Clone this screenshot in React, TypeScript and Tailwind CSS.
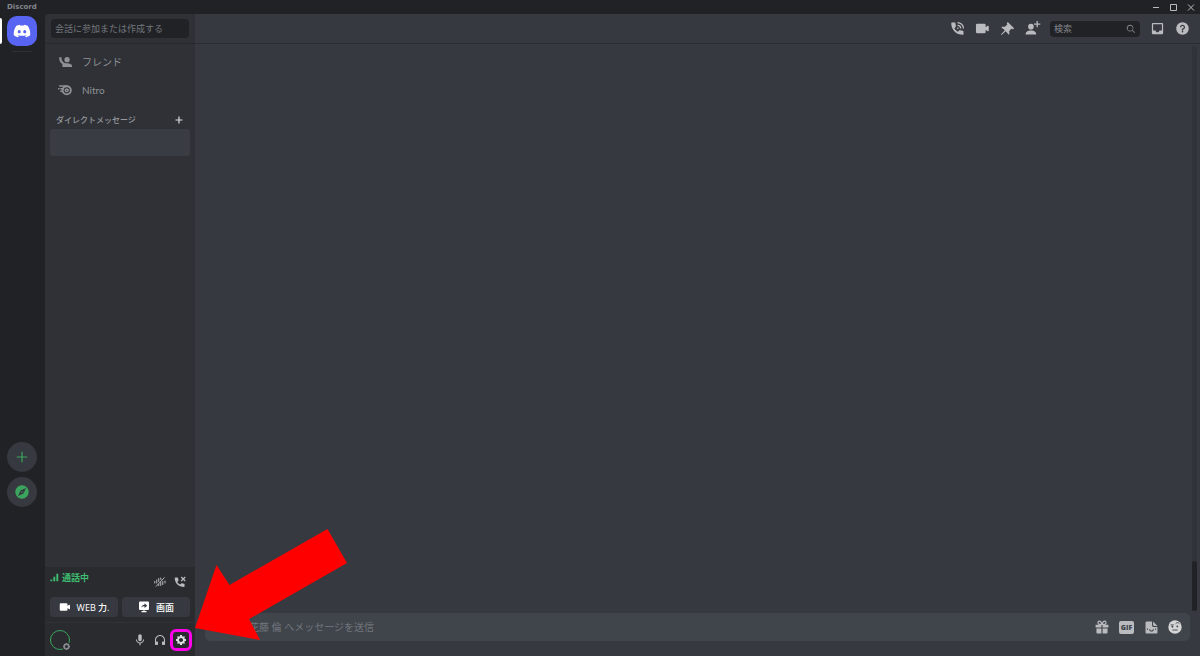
import type { ReactNode } from "react";
import { MdExplore, MdMic } from "react-icons/md";
import { FaDiscord } from "react-icons/fa";

type IconProps = { className?: string };

function Svg({ className, children }: IconProps & { children: ReactNode }) {
  return (
    <svg viewBox="0 0 24 24" className={className} fill="currentColor" aria-hidden="true">
      {children}
    </svg>
  );
}

const FriendsIcon = ({ className }: IconProps) => (
  <Svg className={className}>
    <g transform="translate(2 4)">
      <path d="M0,0 L0,1.5 C0,5.65 2.21,9.28 5.5,11.3 L5.500,16.500 L22,16.500 L22,14.34 C22,11.67 15.67,10.34 13,10.34 L12.75,10.34 C8,10.34 4,6 4,1.5 L4,0 Z" />
      <circle cx="13.500" cy="4" r="4.500" />
    </g>
  </Svg>
);

const NitroIcon = ({ className }: IconProps) => (
  <Svg className={className}>
    <path d="M2 4h13v2.500H2zM4 8.500h5V11H4zM0 8.500h2.500V11H0zM4 13h4v2.500H4z" />
    <circle cx="15" cy="12.500" r="7" fill="none" stroke="currentColor" strokeWidth="3.200" />
    <path fillRule="evenodd" d="M15 8.800l3.500 1.900v3.600L15 16.200l-3.500-1.900v-3.600zM15 11.500a1 1 0 1 0 0 2 1 1 0 0 0 0-2z" />
  </Svg>
);

const CallIcon = ({ className }: IconProps) => (
  <Svg className={className}>
    <path d="M3 2.500h4.500c.6 0 1 .4 1.100 1l.9 4.500c.1.400 0 .8-.3 1.100L7 11.500c1.400 2.500 3.200 4.300 5.700 5.700l2.300-2.300c.3-.3.7-.4 1.100-.3l4.500.9c.600.1 1 .5 1 1.100V21c0 .6-.4 1-1 1C10 22 2 14 2 3.500c0-.6.4-1 1-1z" />
    <path d="M12 2.500a9.500 9.500 0 0 1 9.500 9.500M12 7a5 5 0 0 1 5 5" fill="none" stroke="currentColor" strokeWidth="2" />
    <circle cx="12.500" cy="11.500" r="1.300" />
  </Svg>
);

const VideoIcon = ({ className }: IconProps) => (
  <Svg className={className}>
    <path d="M3.500 4.500h11.500a2 2 0 0 1 2 2V10l3.300-2.300c.7-.4 1.700 0 1.700.9v6.800c0 .9-1 1.300-1.700.9L17 14v3.500a2 2 0 0 1-2 2H3.500a2 2 0 0 1-2-2v-11a2 2 0 0 1 2-2z" />
  </Svg>
);

const PinIcon = ({ className }: IconProps) => (
  <Svg className={className}>
    <path d="M22.500 11.500L12.500 1.500L10.686 3.514L11.900 5.200L8 9.300L3 9L2.300 10.500L7.800 14.800L1.500 21.500L2.500 22.500L9.200 16.200L13.500 21.700L15 21L14.700 16L18.800 12.100L20.586 13.414Z" />
  </Svg>
);

const AddFriendIcon = ({ className }: IconProps) => (
  <Svg className={className}>
    <circle cx="9.500" cy="9" r="4.500" />
    <path d="M1 21.500c0-4.500 3.500-6.500 8.500-6.500s8.500 2 8.500 6.500zM18.500 0h2v4h4v2h-4v4h-2V6h-4V4h4z" />
  </Svg>
);

const SearchIcon = ({ className }: IconProps) => (
  <Svg className={className}>
    <path d="M21.7 20.300L16 14.600a8 8 0 1 0-1.400 1.400l5.700 5.700zM10 16a6 6 0 1 1 0-12 6 6 0 0 1 0 12z" />
  </Svg>
);

const InboxIcon = ({ className }: IconProps) => (
  <Svg className={className}>
    <path
      fillRule="evenodd"
      d="M19 3H4.990C3.880 3 3.010 3.890 3.010 5L3 19C3 20.100 3.880 21 4.990 21H19C20.100 21 21 20.100 21 19V5C21 3.890 20.100 3 19 3ZM19 15H15C15 16.660 13.650 18 12 18C10.350 18 9 16.660 9 15H4.990V5H19V15Z"
    />
  </Svg>
);

const HelpIcon = ({ className }: IconProps) => (
  <Svg className={className}>
    <path
      fillRule="evenodd"
      d="M12 2C6.486 2 2 6.487 2 12C2 17.515 6.486 22 12 22C17.514 22 22 17.515 22 12C22 6.487 17.514 2 12 2ZM12 18.250C11.310 18.250 10.750 17.691 10.750 17C10.750 16.310 11.310 15.750 12 15.750C12.690 15.750 13.250 16.310 13.250 17C13.250 17.691 12.690 18.250 12 18.250ZM13 13.875V15H11V12H12C13.104 12 14 11.103 14 10C14 8.896 13.104 8 12 8C10.896 8 10 8.896 10 10H8C8 7.795 9.795 6 12 6C14.205 6 16 7.795 16 10C16 11.861 14.723 13.429 13 13.875Z"
    />
  </Svg>
);

const GearIcon = ({ className }: IconProps) => (
  <Svg className={className}>
    <path
      fillRule="evenodd"
      d="M19.738 10H22V14H19.739C19.498 14.931 19.100 15.798 18.565 16.564L20 18L18 20L16.565 18.564C15.797 19.099 14.932 19.498 14 19.738V22H10V19.738C9.069 19.498 8.203 19.099 7.436 18.564L6 20L4 18L5.436 16.564C4.901 15.799 4.502 14.932 4.262 14H2V10H4.262C4.502 9.068 4.900 8.202 5.436 7.436L4 6L6 4L7.436 5.436C8.202 4.900 9.068 4.502 10 4.262V2H14V4.261C14.932 4.502 15.797 4.900 16.565 5.435L18 3.999L20 5.999L18.564 7.436C19.099 8.202 19.498 9.069 19.738 10ZM12 16C14.209 16 16 14.209 16 12C16 9.791 14.209 8 12 8C9.791 8 8 9.791 8 12C8 14.209 9.791 16 12 16Z"
    />
  </Svg>
);

const HeadphonesIcon = ({ className }: IconProps) => (
  <Svg className={className}>
    <path d="M12 2C6.486 2 2 6.488 2 12V20C2 21.107 2.895 22 4 22H6C7.104 22 8 21.107 8 20V17C8 15.899 7.104 15 6 15H4V12C4 7.591 7.589 4 12 4C16.411 4 20 7.591 20 12V15H18C16.896 15 16 15.899 16 17V20C16 21.107 16.896 22 18 22H20C21.104 22 22 21.107 22 20V12C22 6.488 17.514 2 12 2Z" />
  </Svg>
);

const SignalIcon = ({ className }: IconProps) => (
  <Svg className={className}>
    <path d="M1 17h5v5H1zM9 10h5v12H9zM17 2h5v20h-5z" />
  </Svg>
);

const NoiseIcon = ({ className }: IconProps) => (
  <Svg className={className}>
    <g stroke="currentColor" strokeWidth="2" strokeLinecap="round" fill="none">
      <path d="M1.500 11v3M5.500 8v6M9.500 5v6M9.500 17v2M13.500 4v3M13.500 13v6M17.500 11v6M22 10v4M4.500 20.500L20.500 3.500" />
    </g>
  </Svg>
);

const HangUpIcon = ({ className }: IconProps) => (
  <Svg className={className}>
    <path d="M2.500 3H7c.6 0 1 .4 1.100 1l.9 4.500c.1.400 0 .8-.3 1.100L6.500 12c1.400 2.500 3.200 4 5.700 5.200l2.300-2.300c.3-.3.7-.4 1.100-.3l4.500.9c.600.1 1 .5 1 1.100V21c0 .6-.4 1-1 1C9.500 22 1.500 14.500 1.500 4c0-.6.4-1 1-1z" />
    <path d="M14.500 2l8 8M22.500 2l-8 8" stroke="currentColor" strokeWidth="2.500" />
  </Svg>
);

const ScreenIcon = ({ className }: IconProps) => (
  <Svg className={className}>
    <path
      fillRule="evenodd"
      d="M2 3.500C2 2.100 3.100 1 4.500 1h15C20.900 1 22 2.100 22 3.500v12c0 1.400-1.100 2.500-2.500 2.500H13v2h4v2.500H7V20h4v-2H4.500C3.100 18 2 16.900 2 15.500zM13 4.500v3c-4 .500-6 3-6.500 6 1.800-2 3.600-2.800 6.500-2.800V14l5.500-4.700z"
    />
  </Svg>
);

const GiftIcon = ({ className }: IconProps) => (
  <Svg className={className}>
    <path d="M1 8h10v5H1zM13 8h10v5H13zM2.500 14.500H11V23H4a1.500 1.500 0 0 1-1.500-1.500zM13 14.500h8.500v7A1.500 1.500 0 0 1 20 23h-7z" />
    <path
      d="M12 7.500C11 3.500 9 2 7.500 2S5 3.200 5 4.600 6 7 7.500 7.500zM12 7.500C13 3.500 15 2 16.500 2S19 3.200 19 4.600 18 7 16.500 7.500z"
      fill="none"
      stroke="currentColor"
      strokeWidth="2"
    />
  </Svg>
);

const StickerIcon = ({ className }: IconProps) => (
  <Svg className={className}>
    <path
      fillRule="evenodd"
      d="M3 1h10v7.500C13 10 14 11 15.500 11H23v10a2 2 0 0 1-2 2H3a2 2 0 0 1-2-2V3a2 2 0 0 1 2-2zM3.500 14v2h2v-2zM18.500 14v2h2v-2zM7.500 15c.4 3 2.200 4.500 4.500 4.500s4.100-1.500 4.500-4.500h-2c-.3 1.700-1.300 2.500-2.500 2.500S9.800 16.700 9.500 15z"
    />
    <path d="M15 1l8 8h-6.500C15.600 9 15 8.400 15 7.500z" />
  </Svg>
);

const EmojiIcon = ({ className }: IconProps) => (
  <Svg className={className}>
    <circle cx="12" cy="12" r="11.500" />
    <circle cx="7.500" cy="11.500" r="1.600" fill="#40444b" />
    <circle cx="16" cy="11" r="1.600" fill="#40444b" />
    <path d="M4.500 8.500h5.500M13 6.500c1.500-2.500 5-2.500 6.500 0M7.500 17.200h9" fill="none" stroke="#40444b" strokeWidth="1.600" />
  </Svg>
);

function IconButton({ label, className = "", children }: { label: string; className?: string; children: ReactNode }) {
  return (
    <button type="button" aria-label={label} className={`flex shrink-0 items-center justify-center ${className}`}>
      {children}
    </button>
  );
}

function TitleBar() {
  return (
    <header className="flex h-3.5 shrink-0 items-center justify-between pl-[7px] pr-0.5 text-[#b9bbbe]">
      <span className="pt-px font-['DejaVu_Sans',sans-serif] text-[7px] leading-none font-bold text-[#82858b]">Discord</span>
      <div className="flex gap-1.5">
        <IconButton label="最小化" className="size-3">
          <svg viewBox="0 0 12 12" className="size-3" stroke="currentColor" fill="none"><path d="M3 6.500h6" /></svg>
        </IconButton>
        <IconButton label="最大化" className="size-3">
          <svg viewBox="0 0 12 12" className="size-3" stroke="currentColor" fill="none"><path d="M2.500 3.500h6v6h-6z" /></svg>
        </IconButton>
        <IconButton label="閉じる" className="size-3">
          <svg viewBox="0 0 12 12" className="size-3" stroke="currentColor" fill="none"><path d="M2 3.500l6 6M8 3.500l-6 6" /></svg>
        </IconButton>
      </div>
    </header>
  );
}

function ServerRail() {
  return (
    <nav aria-label="サーバー" className="relative flex w-[45px] shrink-0 flex-col items-start pt-0.5 pl-[7px]">
      <span className="absolute top-1 left-0 h-[26px] w-0.5 rounded-r-full bg-white" />
      <IconButton label="ホーム" className="size-[30px] rounded-[10px] bg-[#5865f2] text-white">
        <FaDiscord className="size-[18px]" />
      </IconButton>
      <span className="mt-[5px] ml-[5px] h-px w-5 bg-[#2f3136]" />
      <div className="mt-auto mb-[149px] flex flex-col gap-[5px] text-[#3ba55d]">
        <IconButton label="サーバーを追加" className="size-[30px] rounded-full bg-[#36393f]">
          <svg viewBox="0 0 12 12" className="size-3" stroke="currentColor" strokeWidth="1.200"><path d="M6 .8v10.400M.8 6h10.400" /></svg>
        </IconButton>
        <IconButton label="公開サーバーを探す" className="size-[30px] rounded-full bg-[#36393f]">
          <MdExplore className="size-4" />
        </IconButton>
      </div>
    </nav>
  );
}

function VoicePanel() {
  return (
    <section className="flex h-14 flex-col border-b border-[#303237] bg-[#292b2f] px-[5px] pt-1">
      <div className="flex h-[26px] shrink-0 items-start justify-between">
        <div className="flex h-3 items-center gap-[3px] text-[9px] leading-none font-bold text-[#3fbf72]">
          <SignalIcon className="size-[9px]" />
          通話中
        </div>
        <div className="flex gap-2 pt-[5px] pr-1 text-[#b9bbbe]">
          <IconButton label="ノイズ抑制" className="size-3"><NoiseIcon className="size-3" /></IconButton>
          <IconButton label="切断" className="size-3"><HangUpIcon className="size-3" /></IconButton>
        </div>
      </div>
      <div className="grid grid-cols-2 gap-1 text-[9px] leading-none font-medium text-white">
        <button type="button" className="flex h-5 items-center justify-center gap-1.5 rounded-sm bg-[#36393f]">
          <VideoIcon className="size-3" />
          WEB 力.
        </button>
        <button type="button" className="flex h-5 items-center justify-center gap-1.5 rounded-sm bg-[#36393f]">
          <ScreenIcon className="size-3" />
          画面
        </button>
      </div>
    </section>
  );
}

function UserPanel() {
  return (
    <section className="flex h-[33px] items-center justify-between bg-[#292b2f] pr-[3px] pl-[5px]">
      <div className="relative size-5 rounded-full border border-[#3ba55d]">
        <span className="absolute -right-px -bottom-px size-[7px] rounded-full border-2 border-[#85888e] bg-[#292b2f] outline-1 outline-[#292b2f]" />
      </div>
      <div className="flex items-center text-[#b9bbbe]">
        <IconButton label="ミュート" className="w-5"><MdMic className="size-3.5" /></IconButton>
        <IconButton label="スピーカーミュート" className="w-5"><HeadphonesIcon className="size-3" /></IconButton>
        <IconButton label="ユーザー設定" className="size-[22px] rounded-md border-3 border-[#ff00ea] text-[#dcddde]">
          <GearIcon className="size-3" />
        </IconButton>
      </div>
    </section>
  );
}

function Sidebar() {
  return (
    <aside className="flex w-[150px] shrink-0 flex-col rounded-tl-[4px] bg-[#2f3136]">
      <div className="flex h-[30px] shrink-0 items-center border-b border-[#26282c] px-[6px]">
        <input
          aria-label="会話に参加または作成する"
          placeholder="会話に参加または作成する"
          className="h-[19px] w-full rounded-sm bg-[#202225] px-1 text-[9px] outline-none placeholder:text-[#73767d]"
        />
      </div>
      <nav aria-label="ダイレクトメッセージ" className="flex flex-col px-[5px] pt-1 text-[10px] text-[#8e9297]">
        <a href="#friends" className="flex h-7 items-center gap-2.5 pl-2">
          <FriendsIcon className="size-3.5" />
          フレンド
        </a>
        <a href="#nitro" className="flex h-7 items-center gap-2.5 pl-2 font-['Lato',sans-serif]">
          <NitroIcon className="size-3.5" />
          Nitro
        </a>
        <div className="flex h-[25px] items-center justify-between pt-1.5 pr-[7px] pl-1.5">
          <h2 className="text-[8px] leading-none font-medium text-[#96999e]">ダイレクトメッセージ</h2>
          <IconButton label="DMを作成" className="text-[#dcddde]">
            <svg viewBox="0 0 8 8" className="size-2" stroke="currentColor" strokeWidth="1.200"><path d="M4 .5v7M.5 4h7" /></svg>
          </IconButton>
        </div>
        <a href="#dm" aria-label="会話" className="h-[27px] rounded-[3px] bg-[#393c43]" />
      </nav>
      <div className="mt-auto">
        <VoicePanel />
        <UserPanel />
      </div>
    </aside>
  );
}

function Conversation() {
  return (
    <main className="flex min-w-0 flex-1 flex-col bg-[#36393f]">
      <div className="flex h-[30px] shrink-0 items-center justify-end gap-2.5 border-b border-[#2b2d32] pr-2.5 text-[#b9bbbe]">
        <IconButton label="音声通話"><CallIcon className="size-[15px]" /></IconButton>
        <IconButton label="ビデオ通話"><VideoIcon className="size-[15px]" /></IconButton>
        <IconButton label="ピン留め"><PinIcon className="size-[15px]" /></IconButton>
        <IconButton label="フレンドを追加"><AddFriendIcon className="size-[15px] overflow-visible" /></IconButton>
        <label className="flex h-4 w-[90px] items-center rounded-sm bg-[#202225] pr-1 pl-1">
          <input
            aria-label="検索"
            placeholder="検索"
            className="h-4 w-0 min-w-0 flex-1 bg-transparent text-[9px] outline-none placeholder:text-[#84878d]"
          />
          <SearchIcon className="size-2.5 text-[#84878d]" />
        </label>
        <IconButton label="受信ボックス"><InboxIcon className="size-[15px]" /></IconButton>
        <IconButton label="ヘルプ"><HelpIcon className="size-[15px]" /></IconButton>
      </div>
      <div className="flex min-h-0 flex-1 justify-end pt-0.5 pr-[3px] pb-0.5">
        <div className="flex w-[5px] flex-col justify-end rounded-full bg-[#303338]">
          <span className="h-[50px] rounded-full bg-[#202225]" />
        </div>
      </div>
      <form className="mr-2.5 mb-[15px] ml-2.5 flex h-7 shrink-0 items-center gap-2.5 rounded-[5px] bg-[#40444b] pr-2 pl-11 text-[#b9bbbe]">
        <input
          aria-label="メッセージ"
          placeholder="花藤 倫 へメッセージを送信"
          className="h-full min-w-0 flex-1 bg-transparent text-[10px] outline-none placeholder:text-[#72767d]"
        />
        <IconButton label="ギフト" className="w-3.5"><GiftIcon className="size-3.5" /></IconButton>
        <IconButton label="GIF" className="h-[13px] w-[15px] rounded-[2px] bg-[#b9bbbe] font-['Open_Sans',sans-serif] text-[7px] leading-none font-extrabold text-[#40444b]">
          GIF
        </IconButton>
        <IconButton label="スタンプ" className="w-3.5"><StickerIcon className="size-[13px]" /></IconButton>
        <IconButton label="絵文字" className="w-3.5 text-[#d5d5d5]"><EmojiIcon className="size-3.5" /></IconButton>
      </form>
    </main>
  );
}

export default function App() {
  return (
    <div className="relative flex h-screen flex-col overflow-hidden bg-[#202225] font-['Open_Sans','Noto_Sans_CJK_JP',sans-serif]">
      <TitleBar />
      <div className="flex min-h-0 flex-1">
        <ServerRail />
        <Sidebar />
        <Conversation />
      </div>
      <svg viewBox="0 0 152 112" className="pointer-events-none absolute bottom-[15px] left-[195px] h-28 w-[152px]" aria-hidden="true">
        <path d="M0 99L21.500 36L34.500 56L132.500 0L152 34L54 90L65 111Z" fill="#ff0000" />
      </svg>
    </div>
  );
}
